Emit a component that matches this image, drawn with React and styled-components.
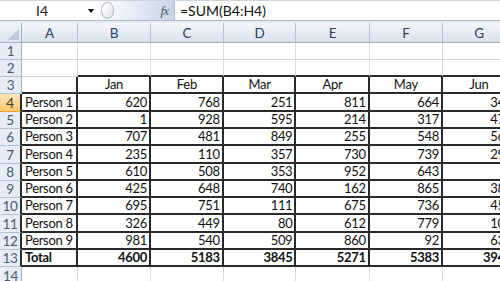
import React from 'react';
import styled, { createGlobalStyle } from 'styled-components';

const GlobalStyle = createGlobalStyle`
  html, body {
    margin: 0;
    padding: 0;
    background: #ffffff;
    overflow: hidden;
  }
`;

const Window = styled.div`
  width: 500px;
  height: 281px;
  overflow: hidden;
  display: flex;
  flex-direction: column;
  font-family: Lato, 'Open Sans', sans-serif;
  background: #ffffff;
`;

const FormulaBar = styled.div`
  height: 19px;
  flex: none;
  display: flex;
  align-items: center;
  border-top: 1px solid #cdd3da;
  border-bottom: 1px solid #a9b9cd;
  background: #ffffff;
`;

const NameBox = styled.div`
  width: 98px;
  flex: none;
  display: flex;
  align-items: center;
  font-size: 14px;
  color: #1f1f1f;
`;

const NameText = styled.span`
  flex: 1;
  text-align: center;
  padding-right: 4px;
`;

const DropArrow = styled.span`
  width: 0;
  height: 0;
  margin-right: 4px;
  border-left: 3.5px solid transparent;
  border-right: 3.5px solid transparent;
  border-top: 4px solid #111;
`;

const FxPill = styled.div`
  width: 77px;
  height: 19px;
  flex: none;
  display: flex;
  align-items: center;
  justify-content: space-between;
  box-sizing: border-box;
  padding: 0 6px 0 3px;
  border-radius: 10px 0 0 10px;
  background: linear-gradient(90deg, #fdfdfe 0%, #e9eff8 40%, #c6d4e8 100%);
  border-right: 1px solid #b3c0d2;
`;

const Knob = styled.span`
  width: 11px;
  height: 15px;
  border-radius: 50%;
  border: 1px solid #aeb9c8;
  background: linear-gradient(135deg, #ffffff 20%, #d9e1ec 100%);
`;

const Fx = styled.span`
  font-family: 'Liberation Serif', serif;
  font-style: italic;
  font-size: 13px;
  color: #4f545c;
  letter-spacing: -1px;
`;

const FormulaText = styled.div`
  padding-left: 5px;
  font-size: 14px;
  color: #111;
`;

const Strip = styled.div`
  height: 2px;
  flex: none;
  background: #e8edf4;
`;

const Grid = styled.div`
  display: grid;
  grid-template-columns: 22px 56px 73px 72.7px 72.7px 73.3px 73.3px 73px 73px;
  grid-template-rows: 19.5px repeat(14, 17.3px);
  font-size: 13px;
  letter-spacing: -0.3px;
`;

const Corner = styled.div`
  box-sizing: border-box;
  position: relative;
  background: linear-gradient(180deg, #f1f4f9, #dce4ef);
  border-right: 1px solid #9fb3ca;
  border-bottom: 1px solid #9fb3ca;
`;

const CornerMark = styled.span`
  position: absolute;
  right: 2px;
  bottom: 2px;
  width: 0;
  height: 0;
  border-left: 12px solid transparent;
  border-bottom: 11px solid #bccadb;
`;

const ColHead = styled.div`
  box-sizing: border-box;
  display: flex;
  align-items: center;
  justify-content: center;
  padding-top: 1px;
  font-size: 13.5px;
  color: #2e3f5c;
  background: linear-gradient(180deg, #f3f6fa 0%, #e6ecf4 50%, #d8e1ec 100%);
  border-right: 1px solid #b3c3d6;
  border-bottom: 1px solid #9fb3ca;
`;

const RowHead = styled.div`
  box-sizing: border-box;
  display: flex;
  align-items: flex-end;
  justify-content: center;
  font-size: 13.5px;
  color: ${p => (p.$active ? '#3b3a36' : '#4a5a73')};
  background: ${p => (p.$active
    ? 'linear-gradient(180deg, #fde6b8, #f7c86e)'
    : '#e6edf6')};
  border-bottom: 1px solid ${p => (p.$active ? '#e3a23d' : '#b3c3d6')};
  border-right: ${p => (p.$dark ? '2px solid #2a2a2a' : '1px solid #9fb3ca')};
`;

const Cell = styled.div`
  box-sizing: border-box;
  display: flex;
  align-items: flex-end;
  justify-content: ${p => (p.$align === 'right' ? 'flex-end' : p.$align === 'center' ? 'center' : 'flex-start')};
  padding: 0 2px 0 3px;
  white-space: nowrap;
  overflow: visible;
  color: #111;
  font-weight: ${p => (p.$bold ? 700 : 400)};
  border-right: ${p => (p.$dr ? '2px solid #2a2a2a' : '1px solid #d6dce6')};
  border-bottom: ${p => (p.$db ? '2px solid #2a2a2a' : '1px solid #d6dce6')};
`;

const columns = ['A', 'B', 'C', 'D', 'E', 'F', 'G', 'H'];

const people = [
  ['Person 1', 620, 768, 251, 811, 664, 345],
  ['Person 2', 1, 928, 595, 214, 317, 478],
  ['Person 3', 707, 481, 849, 255, 548, 562],
  ['Person 4', 235, 110, 357, 730, 739, 291],
  ['Person 5', 610, 508, 353, 952, 643, ''],
  ['Person 6', 425, 648, 740, 162, 865, 387],
  ['Person 7', 695, 751, 111, 675, 736, 459],
  ['Person 8', 326, 449, 80, 612, 779, 104],
  ['Person 9', 981, 540, 509, 860, 92, 633],
];

const rows = [
  ['', '', '', '', '', '', ''],
  ['', '', '', '', '', '', ''],
  ['', 'Jan', 'Feb', 'Mar', 'Apr', 'May', 'Jun'],
  ...people,
  ['Total', 4600, 5183, 3845, 5271, 5383, 3947],
  ['', '', '', '', '', '', ''],
];

function cellProps(r, c) {
  // r is the sheet row number (1-based), c the column index (0 = A)
  const inTable = r >= 4 && r <= 13;
  const headerRow = r === 3;
  return {
    $dr: inTable || headerRow,
    $db: inTable || headerRow || (r === 2 && c > 0),
    $align: headerRow ? 'center' : c === 0 ? 'left' : 'right',
    $bold: r === 13,
  };
}

export default function App() {
  return (
    <Window>
      <GlobalStyle />
      <FormulaBar>
        <NameBox>
          <NameText>I4</NameText>
          <DropArrow />
        </NameBox>
        <FxPill>
          <Knob />
          <Fx>fx</Fx>
        </FxPill>
        <FormulaText>=SUM(B4:H4)</FormulaText>
      </FormulaBar>
      <Strip />
      <Grid>
        <Corner><CornerMark /></Corner>
        {columns.map(col => <ColHead key={col}>{col}</ColHead>)}
        {rows.map((row, i) => {
          const r = i + 1;
          return (
            <React.Fragment key={r}>
              <RowHead $active={r === 4} $dark={r >= 4 && r <= 13}>{r}</RowHead>
              {row.map((v, c) => (
                <Cell key={c} {...cellProps(r, c)}>{v}</Cell>
              ))}
              <Cell />
            </React.Fragment>
          );
        })}
      </Grid>
    </Window>
  );
}
